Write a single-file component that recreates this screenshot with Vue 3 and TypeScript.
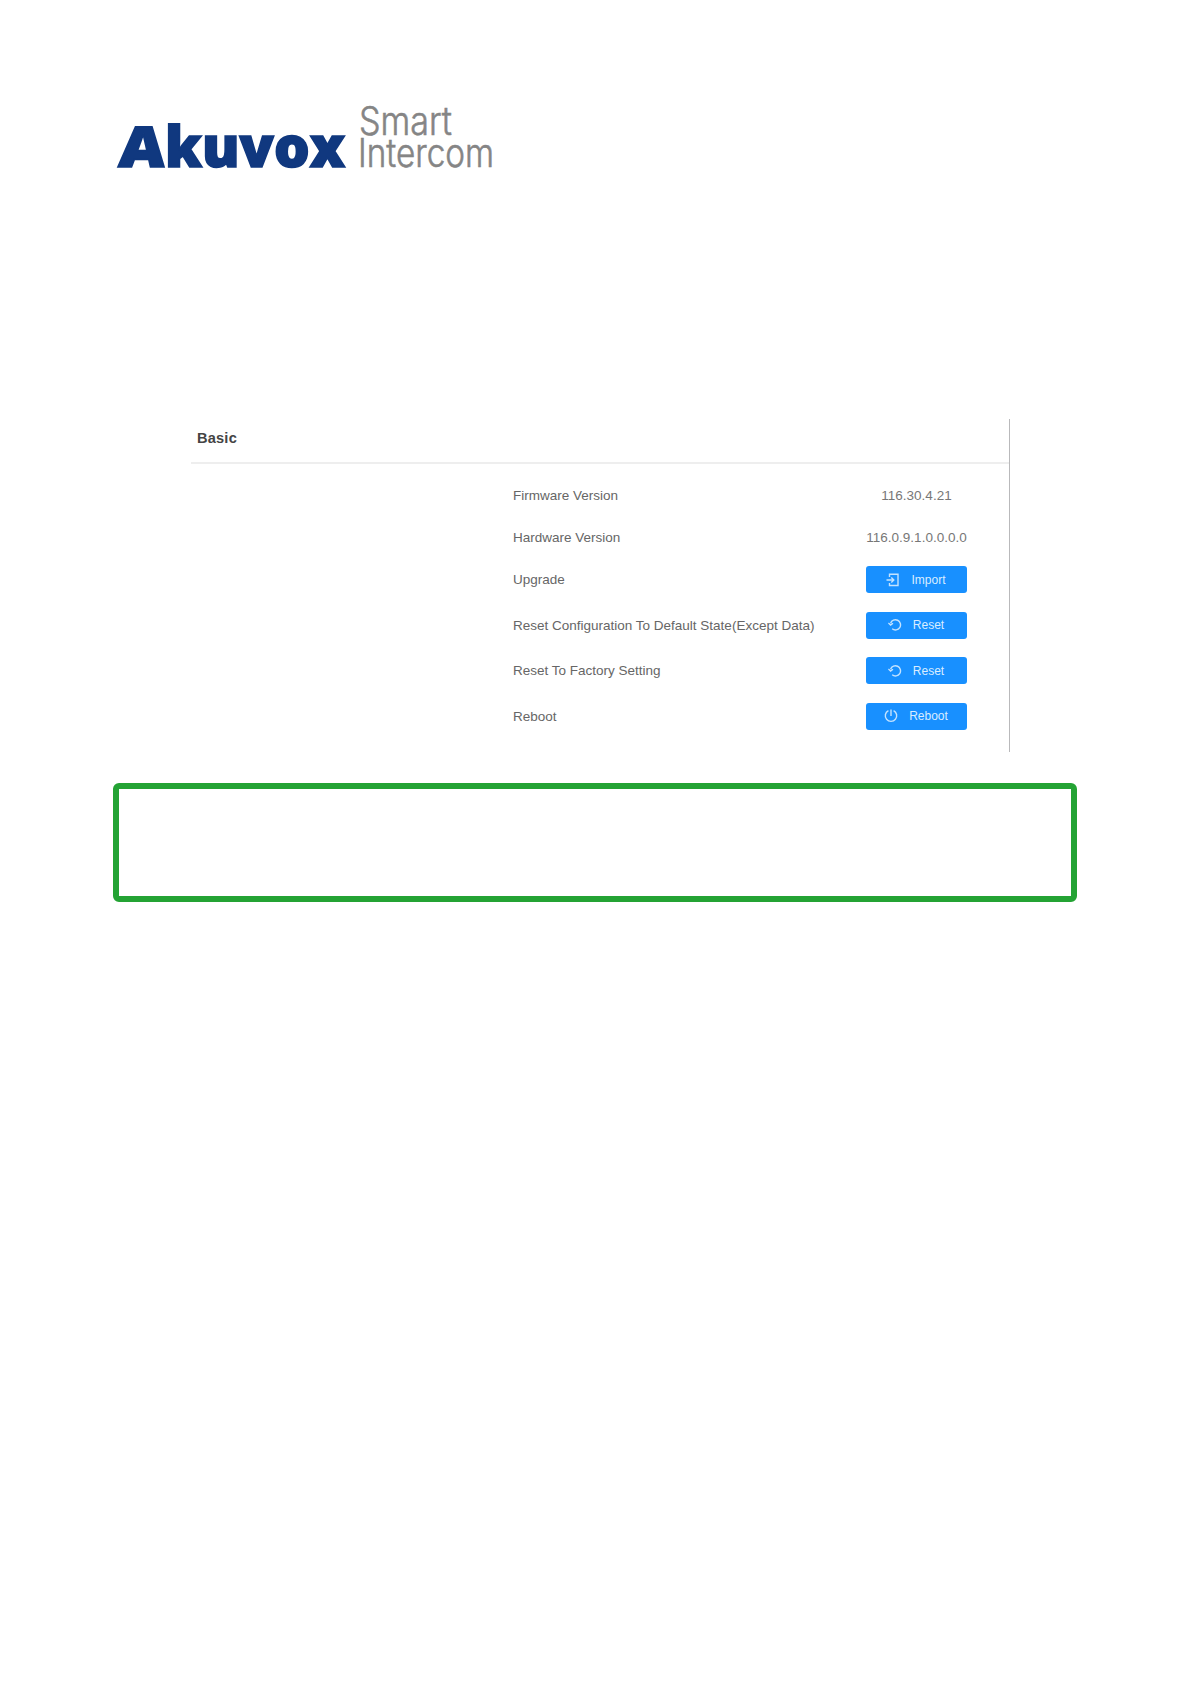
<script setup lang="ts">
import { ref } from 'vue';

interface Row {
  label: string;
  value?: string;
  action?: string;
  icon?: 'import' | 'reset' | 'power';
}

const rows = ref<Row[]>([
  { label: 'Firmware Version', value: '116.30.4.21' },
  { label: 'Hardware Version', value: '116.0.9.1.0.0.0.0' },
  { label: 'Upgrade', action: 'Import', icon: 'import' },
  { label: 'Reset Configuration To Default State(Except Data)', action: 'Reset', icon: 'reset' },
  { label: 'Reset To Factory Setting', action: 'Reset', icon: 'reset' },
  { label: 'Reboot', action: 'Reboot', icon: 'power' },
]);
</script>

<template>
<div class="page">
  <header class="logo">
    <svg width="400" height="140" viewBox="0 0 400 140">
      <g class="brand">
        <text transform="translate(11 107) skewX(-4)" textLength="46" lengthAdjust="spacingAndGlyphs">A</text>
        <text x="58" y="107" textLength="180" lengthAdjust="spacingAndGlyphs">kuvox</text>
      </g>
      <g class="tagline">
        <text x="252" y="74.5" textLength="93" lengthAdjust="spacingAndGlyphs">Smart</text>
        <text x="251" y="107" textLength="136" lengthAdjust="spacingAndGlyphs">Intercom</text>
      </g>
    </svg>
  </header>

  <section class="panel">
    <h2>Basic</h2>
    <div class="rows">
      <div v-for="(row, i) in rows" :key="i" class="row" :class="{ 'has-action': row.action }">
        <span class="label">{{ row.label }}</span>
        <span v-if="row.value" class="value">{{ row.value }}</span>
        <button v-else type="button">
          <svg v-if="row.icon === 'import'" width="14" height="14" viewBox="0 0 14 14">
            <path d="M3.5 4V1.2h8.5v11.3H3.5V10M0.5 7h7M5.3 4.5L7.8 7L5.3 9.5" />
          </svg>
          <svg v-else-if="row.icon === 'reset'" width="14" height="14" viewBox="0 0 14 14">
            <path d="M2.6 5.2A5.1 5.1 0 1 1 4.2 10.8M0.4 5L2.6 7L5 5.2" />
          </svg>
          <svg v-else width="14" height="14" viewBox="0 0 14 14">
            <path d="M4.4 1.6A5.7 5.7 0 1 0 9.6 1.6M7 0.6V7" />
          </svg>
          <span>{{ row.action }}</span>
        </button>
      </div>
    </div>
  </section>

  <div class="note"></div>
</div>
</template>

<style>
body {
  margin: 0;
  background: #fff;
}
</style>

<style scoped>
.page {
  width: 1191px;
  height: 1684px;
  box-sizing: border-box;
  padding-top: 60px;
  font-family: "Liberation Sans", Arial, sans-serif;
  background: #fff;
}
.logo {
  height: 359px;
  padding-left: 107px;
}
.logo svg {
  display: block;
}
.brand {
  font-family: "Open Sans", sans-serif;
  font-weight: 800;
  font-size: 56px;
  fill: #10387f;
  stroke: #10387f;
  stroke-width: 1.6;
}
.tagline {
  font-family: Inter, sans-serif;
  font-weight: 300;
  font-size: 39px;
  fill: #858585;
  stroke: #858585;
  stroke-width: 0.6;
}
.panel {
  width: 818px;
  height: 333px;
  margin-left: 191px;
  border-right: 1px solid #b9b9bb;
}
h2 {
  height: 43px;
  margin: 0;
  padding-left: 6px;
  border-bottom: 2px solid #eee;
  font-size: 14.6px;
  letter-spacing: 0.2px;
  line-height: 38px;
  color: #444;
}
.rows {
  padding: 10px 42px 0 322px;
}
.row {
  display: flex;
  align-items: center;
  justify-content: space-between;
  height: 42px;
  font-size: 13.5px;
  color: #666;
}
.row.has-action {
  height: 27px;
  margin-bottom: 18.5px;
}
.row:nth-child(3) {
  margin-top: 8px;
}
.value {
  width: 101px;
  text-align: center;
  white-space: nowrap;
  color: #777;
}
button {
  display: flex;
  align-items: center;
  justify-content: center;
  gap: 11px;
  width: 101px;
  height: 27px;
  padding: 0 1px 0 0;
  border: none;
  border-radius: 3px;
  background: #1890ff;
  color: #d9edff;
  font-family: inherit;
  font-size: 12px;
}
button svg {
  fill: none;
  stroke: #c4e3ff;
  stroke-width: 1.4;
}

/* Empty green callout under the panel */
.note {
  width: 964px;
  height: 119px;
  margin: 31px 0 0 113px;
  box-sizing: border-box;
  border: 6px solid #24a334;
  border-radius: 6px;
}
</style>
